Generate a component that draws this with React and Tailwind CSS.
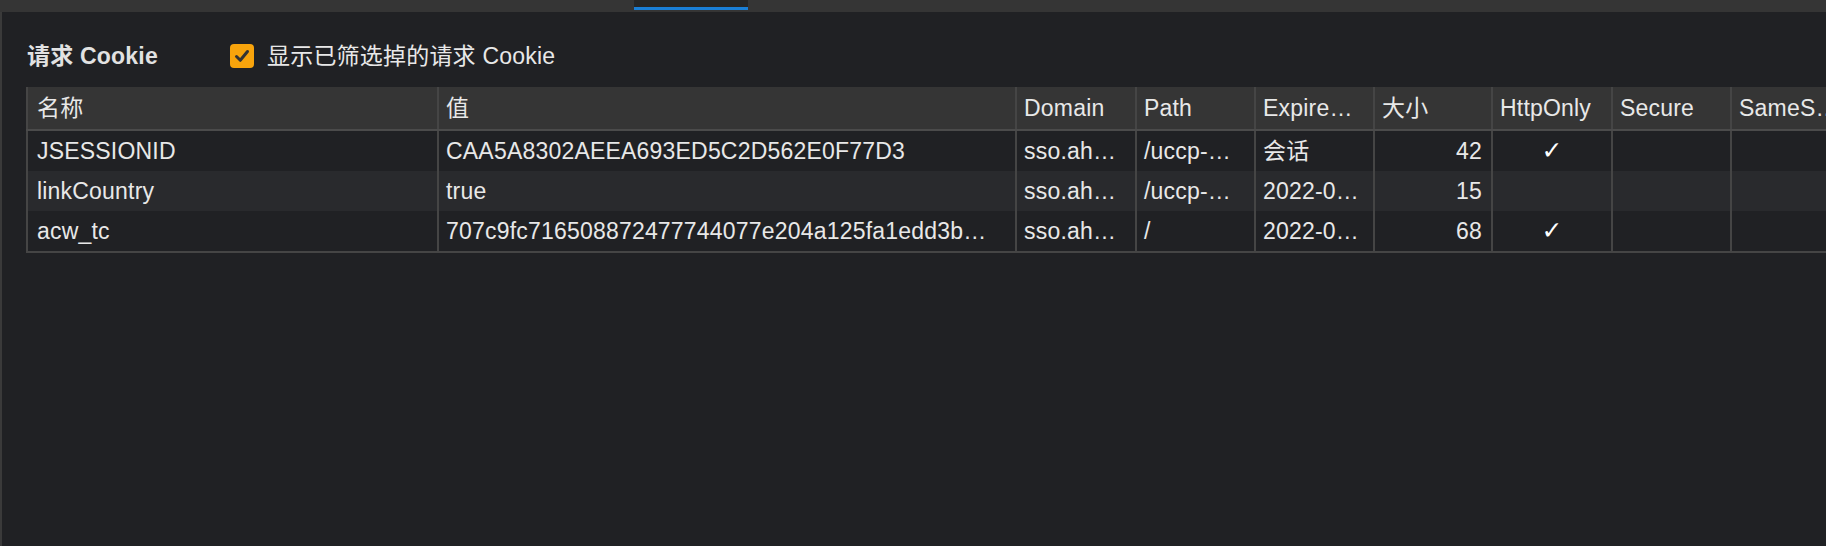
import React from 'react';

const cols = [
  { key: 'name', label: '名称', w: 'w-[411px]', pad: 'pl-[9px]' },
  { key: 'value', label: '值', w: 'w-[578px]', pad: 'pl-[7px]' },
  { key: 'domain', label: 'Domain', w: 'w-[120px]', pad: 'pl-[7px]' },
  { key: 'path', label: 'Path', w: 'w-[119px]', pad: 'pl-[7px]' },
  { key: 'expires', label: 'Expire…', w: 'w-[119px]', pad: 'pl-[7px]' },
  { key: 'size', label: '大小', w: 'w-[118px]', pad: 'pl-[7px]' },
  { key: 'httpOnly', label: 'HttpOnly', w: 'w-[120px]', pad: 'pl-[7px]' },
  { key: 'secure', label: 'Secure', w: 'w-[119px]', pad: 'pl-[7px]' },
  { key: 'sameSite', label: 'SameS…', w: 'w-[160px]', pad: 'pl-[7px]' },
];

const rows = [
  {
    name: 'JSESSIONID',
    value: 'CAA5A8302AEEA693ED5C2D562E0F77D3',
    domain: 'sso.ah…',
    path: '/uccp-…',
    expires: '会话',
    size: '42',
    httpOnly: true,
  },
  {
    name: 'linkCountry',
    value: 'true',
    domain: 'sso.ah…',
    path: '/uccp-…',
    expires: '2022-0…',
    size: '15',
    httpOnly: false,
  },
  {
    name: 'acw_tc',
    value: '707c9fc716508872477744077e204a125fa1edd3b…',
    domain: 'sso.ah…',
    path: '/',
    expires: '2022-0…',
    size: '68',
    httpOnly: true,
  },
];

function Cell({ col, children }) {
  const align =
    col.key === 'size'
      ? 'justify-end pr-[9px]'
      : col.key === 'httpOnly'
        ? 'justify-center'
        : col.pad;
  return (
    <div
      className={`${col.w} shrink-0 flex items-center h-full border-l-2 border-[#454545] overflow-hidden whitespace-nowrap ${align}`}
    >
      {children}
    </div>
  );
}

export default function App() {
  return (
    <div
      className="w-[1826px] h-[546px] overflow-hidden bg-[#202124] flex flex-col text-[#e8e8e8]"
      style={{ fontFamily: '"Liberation Sans", "Noto Sans CJK SC", sans-serif' }}
    >
      {/* tab strip */}
      <div className="h-[12px] bg-[#353535] shrink-0">
        <div className="ml-[634px] w-[114px] flex flex-col">
          <div className="h-[7px] bg-[#262626]" />
          <div className="h-[3px] bg-[#1a7fd6]" />
        </div>
      </div>

      <div className="flex-1 border-l-2 border-[#3a3a3a] pl-[24px] pt-[31px] tracking-[0.2px]">
        <div className="flex items-center h-[26px]">
          <span className="w-[204px] pl-[1px] text-[23px] font-bold text-[#e2e2e2]">请求 Cookie</span>
          <span className="w-[24px] h-[24px] rounded-[4px] bg-[#f8a40c] flex items-center justify-center">
            <svg width="18" height="18" viewBox="0 0 18 18" fill="none">
              <path d="M3.5 9.5 L7.3 13.3 L14.5 4.5" stroke="#333" strokeWidth="3" strokeLinecap="round" strokeLinejoin="round" />
            </svg>
          </span>
          <span className="ml-[13px] text-[23px]">显示已筛选掉的请求 Cookie</span>
        </div>

        <div className="mt-[18px] w-[1900px] border-b-2 border-[#454545] text-[23px]">
          <div className="flex h-[44px] bg-[#353535] border-b-2 border-[#4b4b4b]">
            {cols.map((c) => (
              <Cell key={c.key} col={c.key === 'size' || c.key === 'httpOnly' ? { ...c, key: 'hdr' } : c}>
                {c.label}
              </Cell>
            ))}
          </div>
          {rows.map((r, i) => (
            <div key={r.name} className={`flex h-[40px] ${i % 2 === 1 ? 'bg-[#292a2d]' : 'bg-[#202124]'}`}>
              {cols.map((c) => (
                <Cell key={c.key} col={c}>
                  {c.key === 'httpOnly' ? (
                    r.httpOnly ? (
                      <span className="text-[25px] font-bold text-white" style={{ fontFamily: '"DejaVu Sans", sans-serif' }}>✓</span>
                    ) : null
                  ) : (
                    r[c.key] ?? ''
                  )}
                </Cell>
              ))}
            </div>
          ))}
        </div>
      </div>
    </div>
  );
}
